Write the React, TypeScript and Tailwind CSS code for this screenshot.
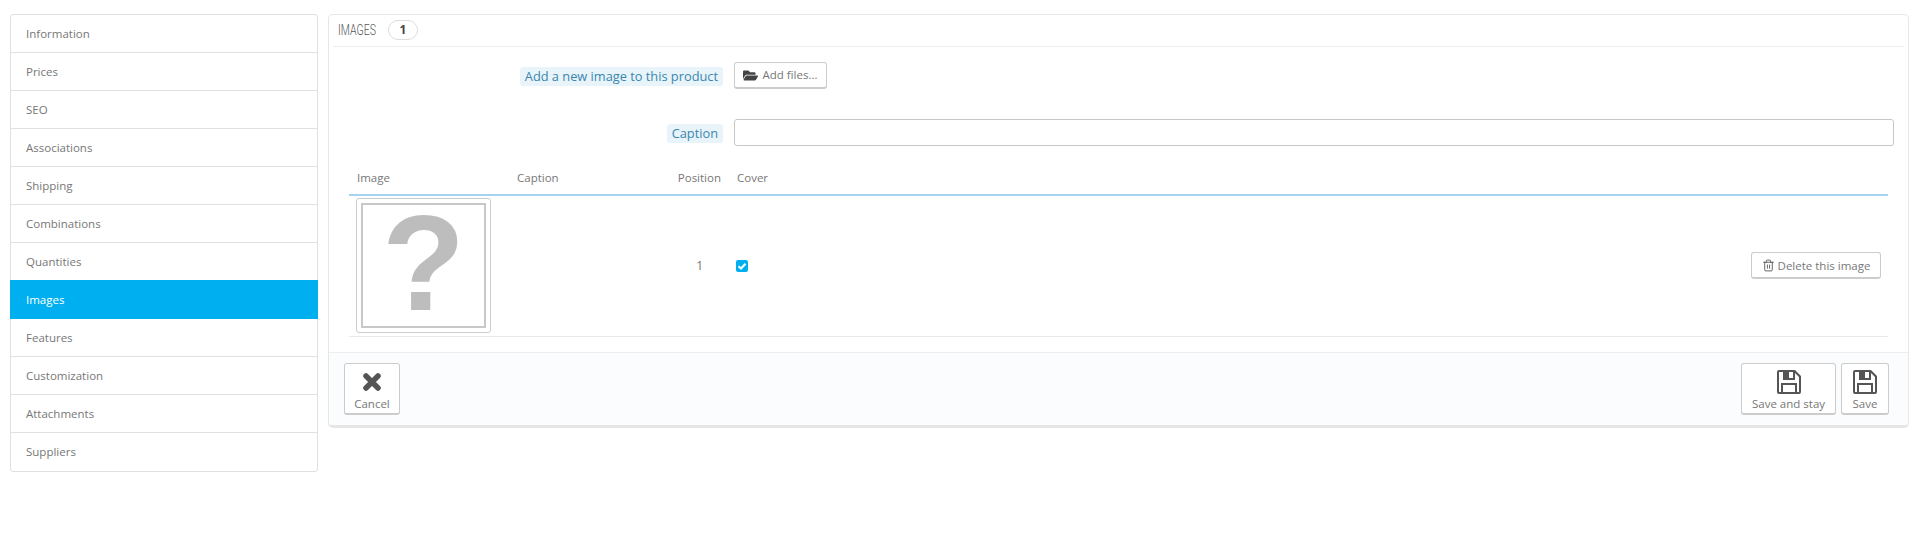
import { FaFolderOpen } from "react-icons/fa";
import { Trash2 } from "lucide-react";

const tabs = [
  "Information",
  "Prices",
  "SEO",
  "Associations",
  "Shipping",
  "Combinations",
  "Quantities",
  "Images",
  "Features",
  "Customization",
  "Attachments",
  "Suppliers",
];

function FieldLabel({ children }: { children: string }) {
  return (
    <div className="flex w-[389px] justify-end">
      <span className="rounded-[3px] bg-[#e8f4fa] px-[5px] text-[12.8px] leading-[19px] text-[#3a87ad]">
        {children}
      </span>
    </div>
  );
}

function SaveIcon() {
  return (
    <svg viewBox="0 0 24 24" className="h-[24px] w-[24px]">
      <path
        fillRule="evenodd"
        fill="#555"
        d="M2 0H18L24 6V22Q24 24 22 24H2Q0 24 0 22V2Q0 0 2 0ZM2 2V22H4V13H20V22H22V7L18 3V10H6V2ZM6 15V22H18V15ZM12 2V8H16V2Z"
      />
    </svg>
  );
}

function CancelIcon() {
  return (
    <svg viewBox="0 0 20 20" className="h-[24px] w-[20px]">
      <path d="M4 4L16 16M16 4L4 16" stroke="#555" strokeWidth="5.5" strokeLinecap="round" />
    </svg>
  );
}

function ToolbarButton({ label, icon, width }: { label: string; icon: React.ReactNode; width: string }) {
  return (
    <button
      className={`flex h-[52px] flex-col items-center rounded-[3px] border border-[#ccc] border-b-[2px] bg-white pt-[6px] text-[11.5px] leading-[15px] text-[#777] ${width}`}
    >
      {icon}
      <span className="mt-[2px]">{label}</span>
    </button>
  );
}

export default function App() {
  return (
    <div className="flex h-[536px] gap-[10px] bg-white pl-[10px] pr-[7px] pt-[14px] font-['Open_Sans',sans-serif] text-[#777]">
      <nav className="h-[458px] w-[308px] shrink-0 rounded-[3px] border border-[#e0e0e0]">
        {tabs.map((tab) =>
          tab === "Images" ? (
            <div
              key={tab}
              className="-mx-px -mt-px flex h-[39px] items-center bg-[#00aff0] pl-[16px] text-[11.5px] text-white"
            >
              {tab}
            </div>
          ) : (
            <div
              key={tab}
              className="flex h-[38px] items-center border-b border-[#e0e0e0] pl-[15px] text-[11.5px] text-[#777] last:border-b-0"
            >
              {tab}
            </div>
          ),
        )}
      </nav>

      <main className="h-[414px] flex-1 overflow-hidden rounded-[5px] border border-b-[3px] border-[#e6e6e6] bg-white">
        <header className="mx-[4px] flex h-[32px] items-center border-b border-[#eee] pb-[1px] pl-[5px]">
          <span className="w-[40px] origin-left scale-x-[0.75] whitespace-nowrap font-['Roboto',sans-serif] text-[14px] font-light text-[#555]">
            IMAGES
          </span>
          <span className="ml-[10px] flex h-[20px] w-[30px] items-center justify-center rounded-full border border-[#ddd] text-[12px] font-bold text-[#444]">
            1
          </span>
        </header>

        <div className="h-[305px] pl-[5px] pr-[14px]">
          <div className="flex items-start gap-[11px] pt-[15px]">
            <div className="pt-[5px]">
              <FieldLabel>Add a new image to this product</FieldLabel>
            </div>
            <button className="flex h-[27px] w-[93px] items-center justify-center gap-[4px] rounded-[3px] border border-[#ccc] border-b-[2px] bg-white text-[11.5px] text-[#777]">
              <FaFolderOpen className="text-[15px] text-[#444]" />
              Add files...
            </button>
          </div>

          <div className="mt-[30px] flex items-center gap-[11px]">
            <div className="pt-[2px]">
              <FieldLabel>Caption</FieldLabel>
            </div>
            <input className="h-[27px] flex-1 rounded-[3px] border border-[#c7c7c7] bg-white" />
          </div>

          <table className="ml-[15px] mt-[16px] w-[1539px] table-fixed border-collapse text-[11.5px]">
            <thead>
              <tr className="h-[33px] border-b-2 border-[#a4d4ee] text-left text-[#777]">
                <th className="w-[160px] pl-[8px] font-normal">Image</th>
                <th className="w-[160px] pl-[8px] font-normal">Caption</th>
                <th className="w-[52px] text-right font-normal">Position</th>
                <th className="pl-[16px] font-normal">Cover</th>
                <th className="w-[200px]"></th>
              </tr>
            </thead>
            <tbody>
              <tr className="h-[141px] border-b border-[#eaeaea]">
                <td className="pl-[7px] align-middle">
                  <div className="flex h-[135px] w-[135px] items-center justify-center rounded-[3px] border border-[#ccc] p-[4px]">
                    <div className="flex h-full w-full items-center justify-center border-[2px] border-[#c8c8c8] pb-[6px] font-['Liberation_Sans',sans-serif] text-[136px] font-bold leading-none text-[#bdbdbd]">
                      ?
                    </div>
                  </div>
                </td>
                <td></td>
                <td className="pr-[18px] text-right text-[12px]">1</td>
                <td className="pl-[15px]">
                  <span className="flex h-[12px] w-[12px] items-center justify-center rounded-[2px] bg-[#00aff0]">
                    <svg viewBox="0 0 12 12" className="h-[12px] w-[12px]">
                      <path d="M2.5 6.2L5 8.5L9.5 3.8" fill="none" stroke="#fff" strokeWidth="2" />
                    </svg>
                  </span>
                </td>
                <td>
                  <div className="flex justify-end pr-[7px]">
                    <button className="flex h-[27px] w-[130px] items-center justify-center gap-[3px] rounded-[3px] border border-[#ccc] border-b-[2px] bg-white text-[11.5px] text-[#777]">
                      <Trash2 size={13} strokeWidth={1.5} className="text-[#444]" />
                      Delete this image
                    </button>
                  </div>
                </td>
              </tr>
            </tbody>
          </table>
        </div>

        <footer className="flex h-[73px] items-start justify-between border-t border-[#eee] bg-[#fbfcfe] pl-[15px] pr-[19px] pt-[10px]">
          <ToolbarButton label="Cancel" width="w-[56px]" icon={<CancelIcon />} />
          <div className="flex gap-[5px]">
            <ToolbarButton label="Save and stay" width="w-[95px]" icon={<SaveIcon />} />
            <ToolbarButton label="Save" width="w-[48px]" icon={<SaveIcon />} />
          </div>
        </footer>
      </main>
    </div>
  );
}
